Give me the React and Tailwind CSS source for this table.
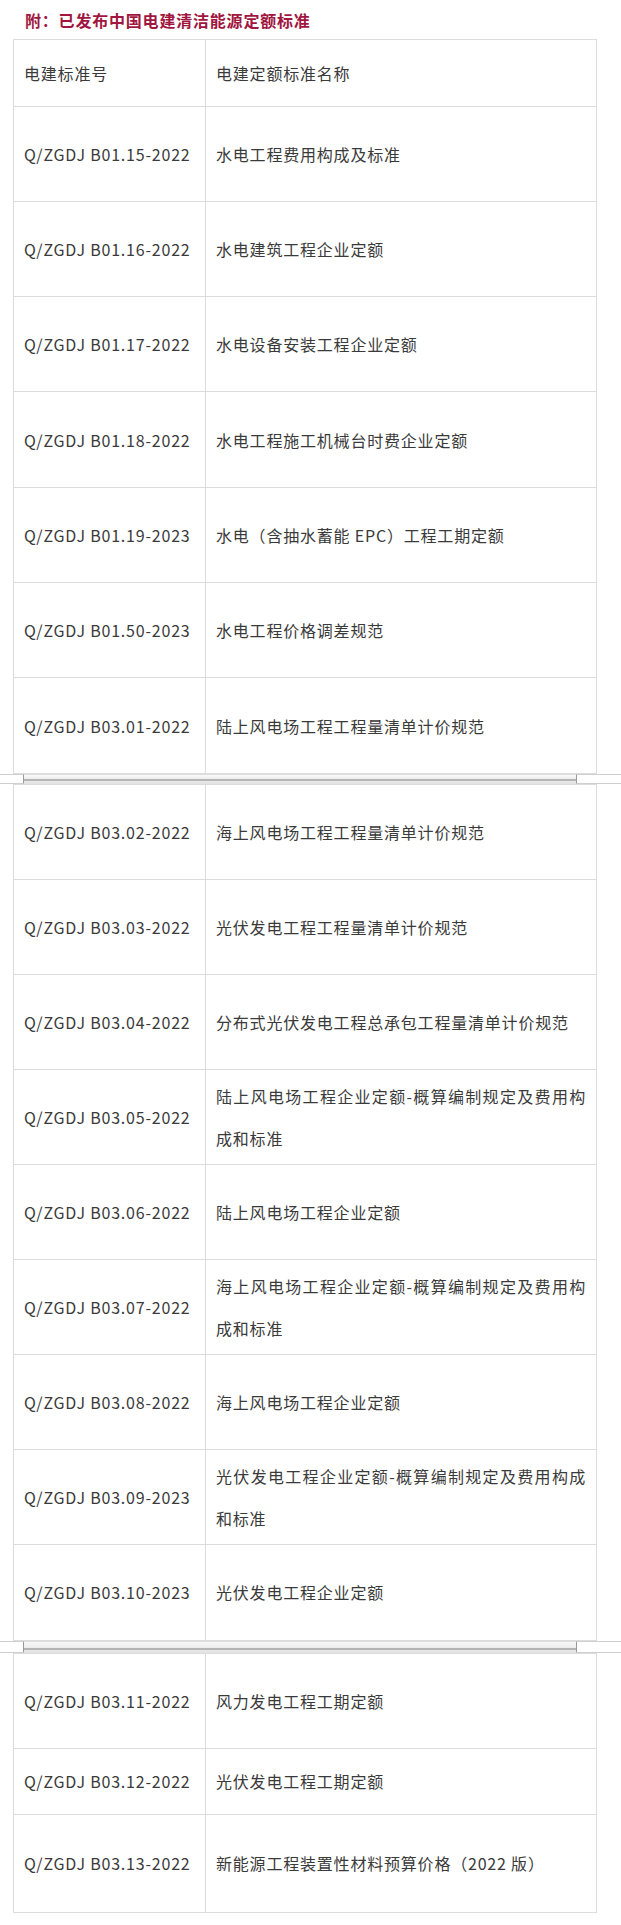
import React from 'react';

const partOne = [
  { code: 'Q/ZGDJ B01.15-2022', name: '水电工程费用构成及标准' },
  { code: 'Q/ZGDJ B01.16-2022', name: '水电建筑工程企业定额' },
  { code: 'Q/ZGDJ B01.17-2022', name: '水电设备安装工程企业定额' },
  { code: 'Q/ZGDJ B01.18-2022', name: '水电工程施工机械台时费企业定额' },
  { code: 'Q/ZGDJ B01.19-2023', name: '水电（含抽水蓄能 EPC）工程工期定额' },
  { code: 'Q/ZGDJ B01.50-2023', name: '水电工程价格调差规范' },
  { code: 'Q/ZGDJ B03.01-2022', name: '陆上风电场工程工程量清单计价规范' },
];

const partTwo = [
  { code: 'Q/ZGDJ B03.02-2022', name: '海上风电场工程工程量清单计价规范' },
  { code: 'Q/ZGDJ B03.03-2022', name: '光伏发电工程工程量清单计价规范' },
  { code: 'Q/ZGDJ B03.04-2022', name: '分布式光伏发电工程总承包工程量清单计价规范' },
  { code: 'Q/ZGDJ B03.05-2022', name: '陆上风电场工程企业定额-概算编制规定及费用构成和标准' },
  { code: 'Q/ZGDJ B03.06-2022', name: '陆上风电场工程企业定额' },
  { code: 'Q/ZGDJ B03.07-2022', name: '海上风电场工程企业定额-概算编制规定及费用构成和标准' },
  { code: 'Q/ZGDJ B03.08-2022', name: '海上风电场工程企业定额' },
  { code: 'Q/ZGDJ B03.09-2023', name: '光伏发电工程企业定额-概算编制规定及费用构成和标准' },
  { code: 'Q/ZGDJ B03.10-2023', name: '光伏发电工程企业定额' },
];

const partThree = [
  { code: 'Q/ZGDJ B03.11-2022', name: '风力发电工程工期定额', h: 'h-[95px]' },
  { code: 'Q/ZGDJ B03.12-2022', name: '光伏发电工程工期定额', h: 'h-[66px]' },
  { code: 'Q/ZGDJ B03.13-2022', name: '新能源工程装置性材料预算价格（2022 版）', h: 'h-[98px]' },
];

const Row = ({ code, name, h }) => (
  <div className={`flex border-b border-[#dcdcdc] ${h}`}>
    <div className="flex w-[192px] shrink-0 items-center border-r border-[#dcdcdc] pl-[10px]">
      {code}
    </div>
    <div className="flex flex-1 items-center px-[10px]">
      <p className="w-full text-justify leading-[42px]">{name}</p>
    </div>
  </div>
);

// page joins between the screenshot parts
const Seam = ({ h }) => (
  <div className={`flex w-full ${h}`}>
    <div className="w-[23px] border-y border-[#cfcfcf]" />
    <div className="flex flex-1 flex-col justify-end border-x border-x-[#9a9a9a] border-t border-t-[#dedede] border-b border-b-[#e2e2e2] bg-linear-to-b from-[#f8f8f8] to-[#e4e4e4]">
      <div className="mb-[2px] h-[2px] bg-[#b4b4b4]" />
    </div>
    <div className="w-[44px] border-y border-[#cfcfcf]" />
  </div>
);

const App = () => {
  return (
    <div className="w-[621px] bg-white pb-[15px] font-['Noto_Sans_CJK_SC','Noto_Sans',sans-serif] text-[16px] tracking-[0.8px] text-[#3a3a3a]">
      <div className="flex h-[39px] items-center pl-[25px] font-bold text-[#a0163f]">
        附：已发布中国电建清洁能源定额标准
      </div>

      <div className="ml-[13px] w-[584px] border-x border-t border-[#dcdcdc]">
        <Row code="电建标准号" name="电建定额标准名称" h="h-[66.6px]" />
        {partOne.map((r) => (
          <Row key={r.code} code={r.code} name={r.name} h="h-[95.3px]" />
        ))}
      </div>

      <Seam h="h-[10px]" />

      <div className="ml-[13px] w-[584px] border-x border-t border-[#dcdcdc]">
        {partTwo.map((r) => (
          <Row key={r.code} code={r.code} name={r.name} h="h-[95.1px]" />
        ))}
      </div>

      <Seam h="h-[12px]" />

      <div className="ml-[13px] w-[584px] border-x border-t border-[#dcdcdc]">
        {partThree.map((r) => (
          <Row key={r.code} code={r.code} name={r.name} h={r.h} />
        ))}
      </div>
    </div>
  );
};

export default App;
